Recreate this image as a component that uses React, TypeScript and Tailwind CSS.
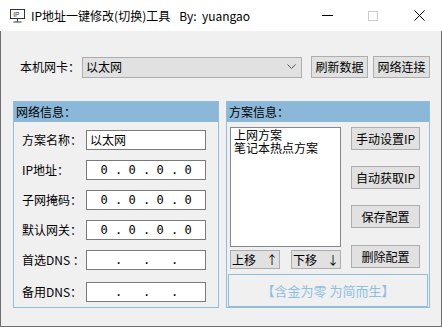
import React from 'react';

const font = { fontFamily: '"Noto Sans CJK SC", "Noto Sans", sans-serif' };

const Btn = ({ children, className = '' }: { children: React.ReactNode; className?: string }) => (
  <div
    className={`flex items-center justify-center whitespace-nowrap border border-[#adadad] bg-[#e1e1e1] text-[12px] text-black ${className}`}
  >
    {children}
  </div>
);

const IpBox = ({ values }: { values: string[] }) => (
  <div className="flex h-[20px] w-[120px] items-center border border-[#7a7a7a] bg-white pl-[6px] text-[12px] text-black font-['DejaVu_Sans_Mono',monospace]">
    {values.map((v, i) => (
      <React.Fragment key={i}>
        <span className="w-[22px] text-center">{v}</span>
        {i < 3 && <span className="w-[6px] text-center">.</span>}
      </React.Fragment>
    ))}
  </div>
);

const Row = ({ label, children, className = '' }: { label: string; children: React.ReactNode; className?: string }) => (
  <div className={`flex items-center ${className}`}>
    <span className="w-[72px] whitespace-nowrap pl-[8px] text-[12px]">{label}</span>
    {children}
  </div>
);

const zeros = ['0', '0', '0', '0'];
const blanks = ['', '', '', ''];

export default function App() {
  return (
    <div className="h-[327px] w-[442px] overflow-hidden bg-white text-black" style={font}>
      {/* title bar */}
      <div className="flex h-[31px] items-center bg-white pl-[10px]">
        <svg width="15" height="14" viewBox="0 0 15 14" className="mr-[6px]">
          <rect x="0.5" y="0.5" width="14" height="9" fill="none" stroke="#333" />
          <text x="3.2" y="7.6" fontSize="6.5" fill="#333" fontFamily="Liberation Sans">IP</text>
          <line x1="7.5" y1="10" x2="7.5" y2="12.5" stroke="#333" />
          <line x1="3.5" y1="13" x2="11.5" y2="13" stroke="#333" />
        </svg>
        <span className="whitespace-nowrap text-[12px]">IP地址一键修改(切换)工具</span>
        <span className="ml-[9px] whitespace-nowrap text-[12px]">By:&nbsp;&nbsp;yuangao</span>
        <div className="ml-auto flex h-full items-center">
          <div className="flex w-[46px] justify-center">
            <div className="h-px w-[11px] bg-black" />
          </div>
          <div className="flex w-[46px] justify-center">
            <div className="h-[10px] w-[10px] border border-[#cccccc]" />
          </div>
          <div className="flex w-[46px] justify-center">
            <svg width="11" height="11" viewBox="0 0 11 11">
              <path d="M0.5 0.5L10.5 10.5M10.5 0.5L0.5 10.5" stroke="#000" strokeWidth="1" />
            </svg>
          </div>
        </div>
      </div>

      {/* body */}
      <div className="h-[296px] border-x border-b border-[#6e6e6e] bg-[#f0f0f0]">
        <div className="flex items-center pt-[25px] pl-[19px]">
          <span className="w-[62px] whitespace-nowrap text-[12px]">本机网卡：</span>
          <div className="flex h-[21px] w-[220px] items-center border border-[#adadad] bg-[#e1e1e1] pl-[3px] text-[12px]">
            <span>以太网</span>
            <svg width="9" height="6" viewBox="0 0 9 6" className="ml-auto mr-[5px]">
              <path d="M0.5 0.5L4.5 4.5L8.5 0.5" fill="none" stroke="#555" />
            </svg>
          </div>
          <Btn className="ml-[9px] h-[22px] w-[57px]">刷新数据</Btn>
          <Btn className="ml-[5px] h-[22px] w-[57px]">网络连接</Btn>
        </div>

        <div className="mt-[23px] flex pl-[12px]">
          {/* left group */}
          <div className="flex h-[207px] w-[206px] flex-col border border-[#8fbedc]">
            <div className="flex h-[20px] items-center bg-[#8bb8d8] pl-[2px] text-[12px]">网络信息：</div>
            <Row label="方案名称：" className="mt-[8px]">
              <div className="flex h-[20px] w-[120px] items-center border border-[#7a7a7a] bg-white pl-[3px] text-[12px]">
                以太网
              </div>
            </Row>
            <Row label="IP地址：" className="mt-[10px]">
              <IpBox values={zeros} />
            </Row>
            <Row label="子网掩码：" className="mt-[10px]">
              <IpBox values={zeros} />
            </Row>
            <Row label="默认网关：" className="mt-[10px]">
              <IpBox values={zeros} />
            </Row>
            <Row label="首选DNS ：" className="mt-[10px]">
              <IpBox values={blanks} />
            </Row>
            <Row label="备用DNS：" className="mt-[12px]">
              <IpBox values={blanks} />
            </Row>
          </div>

          {/* right group */}
          <div className="ml-[7px] flex h-[207px] w-[204px] flex-col border border-[#8fbedc]">
            <div className="flex h-[20px] items-center bg-[#8bb8d8] pl-[2px] text-[12px]">方案信息：</div>
            <div className="mt-[5px] flex pl-[3px]">
              <div className="flex flex-col">
                <div className="h-[120px] w-[111px] border border-[#828790] bg-white pl-[3px] text-[12px] leading-[13px]">
                  <div>上网方案</div>
                  <div>笔记本热点方案</div>
                </div>
                <div className="mt-[3px] flex">
                  <Btn className="h-[19px] w-[50px] gap-[10px]">
                    <span>上移</span>
                    <span>↑</span>
                  </Btn>
                  <Btn className="ml-[11px] h-[19px] w-[50px] gap-[10px]">
                    <span>下移</span>
                    <span>↓</span>
                  </Btn>
                </div>
              </div>
              <div className="ml-[10px] flex flex-col">
                <Btn className="h-[23px] w-[69px]">手动设置IP</Btn>
                <Btn className="mt-[16px] h-[23px] w-[69px]">自动获取IP</Btn>
                <Btn className="mt-[16px] h-[23px] w-[69px]">保存配置</Btn>
                <Btn className="mt-[17px] h-[23px] w-[69px]">删除配置</Btn>
              </div>
            </div>
            <div className="ml-[1px] mt-[5px] flex h-[33px] w-[200px] items-center justify-center border border-[#8fbedc] text-[13px] text-[#8dbfe2]">
              【含金为零 为简而生】
            </div>
          </div>
        </div>
      </div>
    </div>
  );
}
